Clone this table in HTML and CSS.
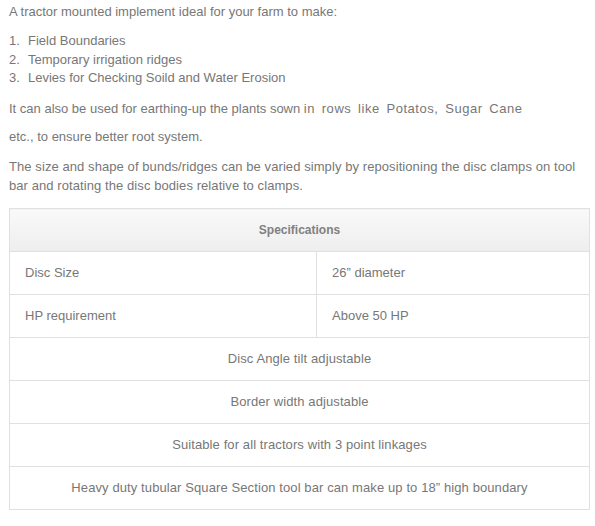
FILE: index.html
```html
<!DOCTYPE html>
<html>
<head>
<meta charset="utf-8">
<link rel="stylesheet" href="styles.css">
</head>
<body>
<div class="content">
  <p class="intro">A tractor mounted implement ideal for your farm to make:</p>
  <ol class="uses">
    <li>Field Boundaries</li>
    <li>Temporary irrigation ridges</li>
    <li>Levies for Checking Soild and Water Erosion</li>
  </ol>
  <p class="p-also">It can also be used for earthing-up the plants sown <span class="wide">in rows like Potatos, Sugar Cane</span></p>
  <p class="p-etc">etc., to ensure better root system.</p>
  <p class="p-size">The size and shape of bunds/ridges can be varied simply by repositioning the disc clamps on tool bar and rotating the disc bodies relative to clamps.</p>
  <table class="specs">
    <thead>
      <tr><th colspan="2">Specifications</th></tr>
    </thead>
    <tbody>
      <tr><td class="label">Disc Size</td><td class="value">26” diameter</td></tr>
      <tr><td class="label">HP requirement</td><td class="value">Above 50 HP</td></tr>
      <tr><td colspan="2" class="center">Disc Angle tilt adjustable</td></tr>
      <tr><td colspan="2" class="center">Border width adjustable</td></tr>
      <tr><td colspan="2" class="center">Suitable for all tractors with 3 point linkages</td></tr>
      <tr><td colspan="2" class="center">Heavy duty tubular Square Section tool bar can make up to 18” high boundary</td></tr>
    </tbody>
  </table>
</div>
</body>
</html>
```
FILE: styles.css
```css
html, body {
  margin: 0;
  padding: 0;
  background: #ffffff;
}
body {
  font-family: "Liberation Sans", Arial, sans-serif;
  font-size: 13px;
  line-height: 18.5px;
  color: #777777;
}
.content {
  width: 581px;
  padding: 3px 0 0 9px;
}
p {
  margin: 0;
}
.intro {
  margin-bottom: 10.5px;
}
.uses {
  list-style: none;
  margin: 0 0 12.5px 0;
  padding: 0;
  counter-reset: item;
}
.uses li {
  counter-increment: item;
}
.uses li::before {
  content: counter(item) ".";
  display: inline-block;
  width: 19px;
}
.p-also {
  margin-bottom: 9.5px;
}
.p-also .wide {
  letter-spacing: 0.55px;
  word-spacing: 2.5px;
}
.p-etc {
  margin-bottom: 11.5px;
}
.p-size {
  margin-bottom: 13px;
  letter-spacing: 0.08px;
}
.specs {
  width: 581px;
  border-collapse: collapse;
  border: 1px solid #e0e0e0;
}
.specs th,
.specs td {
  border: 1px solid #e0e0e0;
  height: 42px;
  padding: 0 15px;
  vertical-align: middle;
}
.specs th {
  font-size: 12px;
  font-weight: bold;
  text-align: center;
  color: #808080;
  background: linear-gradient(to bottom, #f9f9f9, #eeeeee);
}
.specs td.label {
  width: 276px;
  text-align: left;
}
.specs td.value {
  text-align: left;
}
.specs td.center {
  text-align: center;
  letter-spacing: 0.1px;
}
```
